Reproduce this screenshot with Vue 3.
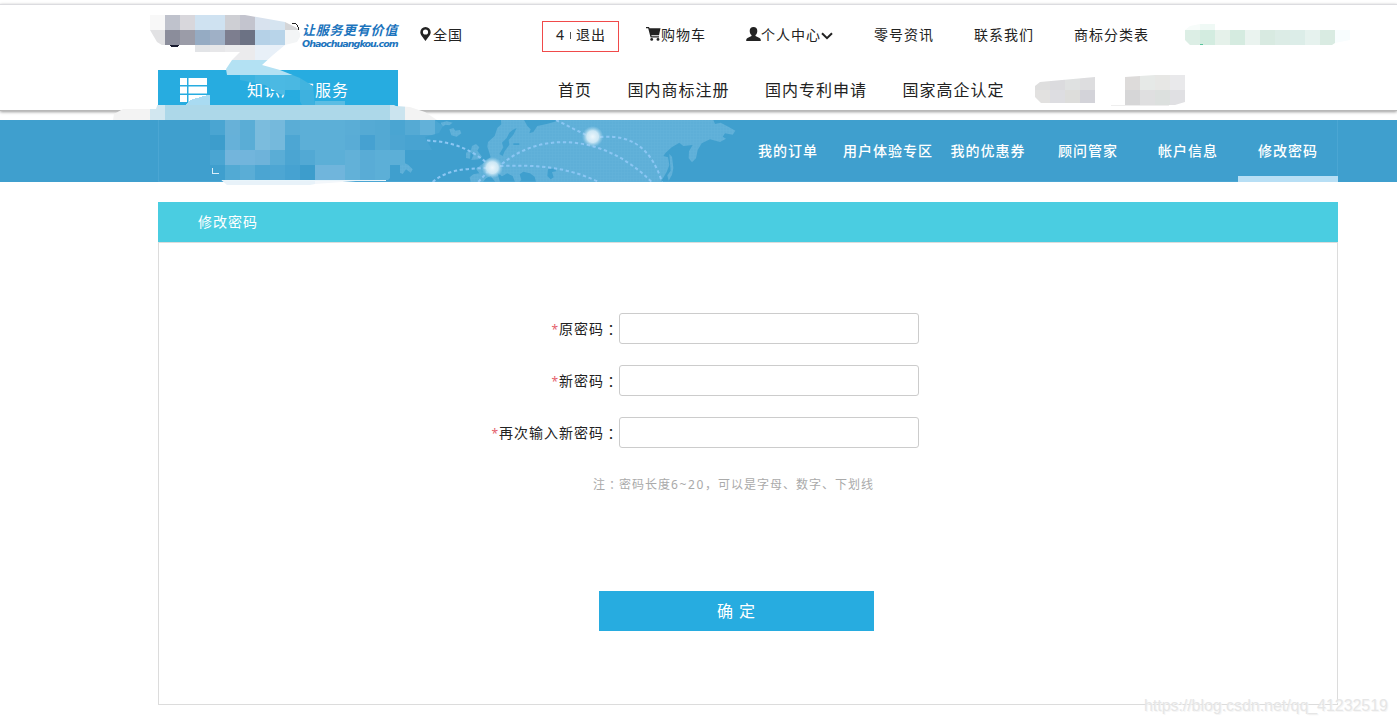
<script setup>
const utilities = ['零号资讯', '联系我们', '商标分类表']
const navItems = ['首页', '国内商标注册', '国内专利申请', '国家高企认定']
const tabs = ['我的订单', '用户体验专区', '我的优惠券', '顾问管家', '帐户信息', '修改密码']
const fields = ['原密码', '新密码', '再次输入新密码']

// Each mosaic row: left edge, top edge, height, then one colour per 15px tile.
const row = (x, y, h, colors) =>
  colors.split(' ').map((c, i) => ({ x: x + i * 15, y, h, c })).filter((t) => t.c !== '-')

const logoTiles = [
  ...row(150, 15, 15, '#f8f8f8 #bfc2cc #d8d7dc #cfe2f1 #cfe2f1 #cecfd4 #c3c4ce #d8e2ee #d5e4f0 #d4d5d7'),
  ...row(150, 30, 15, '#e2e2e4 #8b8d9b #9b9ca8 #95abc3 #9fb0c6 #7d7e8f #6c7284 #b5d1e7 #b8d4e9 #f3f5f6'),
  ...row(195, 45, 15, '#e2e4e7 #e7e7e9 #ebebed #ebebed #e8f0f8 #e8f0f8 #f3f5f6'),
  ...row(225, 60, 15, '#b3e1f3 #b3e1f3 #b3e1f3 #b3e1f3 #b3e1f3'),
  ...row(240, 75, 15, '#3bb3e0 #46b7e2 #4bb9e3 #4ab8e2 #42b4df #42b4df'),
  ...row(240, 90, 15, '#3bb3e0 #3bb3e0 #4ebae4 #27ace0 #3eb1df #30aee0'),
]
const bandTiles = [
  ...row(110, 105, 15, '#f3f3f3 #f3f3f3 #f3f3f3'),
  ...row(150, 105, 15, '#d2e7f0 #add8e9 #add8e9 #add8e9 #add8e9 #add8e9 #add8e9 #add8e9 #add8e9 #add8e9 #add8e9 #add8e9 #add8e9 #add8e9 #add8e9 #add8e9 #cbe4ef #f3f3f3 #f3f3f3 #f3f3f3'),
]
const bannerTiles = [
  ...row(210, 120, 15, '#4aa5d2 #67b1d8 #5aadd6 #7bbcdd #75b9dc #5aadd6 #5cafd7 #5cafd7 #5cafd7 #5aadd6 #55aad4 #53a9d3 #4aa5d2 #55aad4 #62b1d9 #4aa5d2'),
  ...row(210, 135, 15, '#3d9dcc #66b1d9 #5aadd6 #7bbcdd #75b9dc #4da6d3 #5cafd7 #5cafd7 #5cafd7 #59acd6 #46a1d1 #53a9d3 #4ca5d2 #48a3d1 #48a3d1'),
  ...row(210, 150, 15, '#4aa5d2 #73b5dc #72b5dc #6eb3da #5aadd6 #4ba5d2 #52a9d4 #5cafd7 #5cafd7 #62b1d8 #59acd6 #5cafd7 #5cafd7'),
  ...row(210, 165, 15, '#3f9fce #52aad4 #5aadd6 #4ba5d2 #4da6d3 #46a2d1 #3d9dcc #70b5dc #70b5dc #62b1d8 #59acd6 #5cafd7'),
  ...row(210, 180, 6, '#e8f2f9 #e8f2f9 #e8f2f9 #e8f2f9 #e8f2f9 #e8f2f9 #e8f2f9 #f3f7fb #f3f7fb #f3f7fb'),
]
const greenTiles = [
  ...row(1185, 24, 6, '#f7fcfa #eff9f5'),
  ...row(1185, 30, 15, '#dceee5 #d3ece0 #e5f1ea #d5ebe0 #eaf3ef #d8eae1 #dcece6 #dcede8 #e6f2ee #d9ebe2 #f8fdfe'),
]
const grayTiles = [
  ...row(1035, 75, 15, '#dedede #dbdbde #dfe1e1 #dddddf'),
  ...row(1035, 90, 13, '#e2e1e0 #dddde1 #dddddb #d3d3d9'),
  ...row(1125, 75, 15, '#dddbda #e6e9e7 #e7e7e5 #e9e9eb'),
  ...row(1125, 90, 15, '#d6d6d7 #dfdfe0 #dce0de #e0e0e3'),
]
const groups = [
  { clip: 'clip-logo', tiles: logoTiles },
  { clip: 'clip-band', tiles: bandTiles },
  { clip: 'clip-banner', tiles: bannerTiles },
  { clip: 'clip-green', tiles: greenTiles },
  { clip: 'clip-gray', tiles: grayTiles },
]
</script>

<template>
  <div class="page">
    <header class="header">
      <div class="topline">
        <div class="slogan">
          <span class="slogan-cn">让服务更有价值</span>
          <span class="slogan-url">Ohaochuangkou.com</span>
        </div>
        <div class="place">
          <svg width="11" height="14" viewBox="0 0 11 14"><path fill="#222" fill-rule="evenodd" d="M5.5 0A5.2 5.2 0 0 0 .3 5.2C.3 8 3 10 5.5 14 8 10 10.700 8 10.700 5.200A5.200 5.200 0 0 0 5.500 0ZM5.500 2.400A2.600 2.600 0 1 1 5.500 7.600 2.600 2.600 0 0 1 5.500 2.400Z" /></svg>
          <span>全国</span>
        </div>
        <div class="account"><span class="count">4</span><i class="divider"></i><span>退出</span></div>
        <div class="cart">
          <svg width="15" height="14" viewBox="0 0 15 14"><path fill="#222" d="M0 0H3L3.500 1.300H14.500L13 8.300H5.300L5.600 9.200H13V10.600H4.600L2.200 1.300H0Z" /><circle cx="5.700" cy="12.400" r="1.400" fill="#222" /><circle cx="12" cy="12.400" r="1.400" fill="#222" /></svg>
          <span>购物车</span>
        </div>
        <div class="center">
          <svg width="15" height="14" viewBox="0 0 15 14"><path fill="#222" d="M7.500 0C9.900 0 11.300 1.500 11.300 3.900 11.300 5.800 10.500 7.200 9.500 8V9L13.500 11C14.400 11.500 14.800 12.200 14.800 14H.2C.2 12.200.6 11.500 1.500 11L5.500 9V8C4.500 7.200 3.700 5.800 3.700 3.900 3.700 1.500 5.100 0 7.500 0Z" /></svg>
          <span>个人中心</span>
          <svg class="chevron" width="12" height="8" viewBox="0 0 12 8"><path d="M1 1.200 6 6.200 11 1.200" fill="none" stroke="#222" stroke-width="2" /></svg>
        </div>
        <a v-for="u in utilities" :key="u" class="utility">{{ u }}</a>
      </div>
      <div class="mainline">
        <div class="catalog">
          <svg width="27" height="24" viewBox="0 0 27 24"><path fill="#fff" d="M0 0h7v7H0zM8.500 0H27v7H8.500zM0 8.500h7v7H0zM8.500 8.500H27v7H8.500zM0 17h7v7H0zM8.500 17H27v7H8.500z" /></svg>
          <span>知识产权服务</span>
        </div>
        <nav class="main-nav"><a v-for="n in navItems" :key="n">{{ n }}</a></nav>
      </div>
    </header>

    <div class="banner">
      <svg class="map" width="350" height="62" viewBox="0 30 1050 186">
        <defs>
          <pattern id="grid" width="9" height="9" patternUnits="userSpaceOnUse"><rect width="9" height="9" fill="#5eafd8" /><path d="M0 8H9M8 0V9" stroke="#65b3da" stroke-width="1.500" /></pattern>
          <radialGradient id="glow"><stop offset="0" stop-color="#edf7fc" /><stop offset=".55" stop-color="#d7edf8" stop-opacity=".9" /><stop offset="1" stop-color="#a7d6ee" stop-opacity="0" /></radialGradient>
        </defs>
        <g fill="url(#grid)">
          <path d="M303 30H372L382 48 392 58 388 70 400 66 412 48 440 42 462 36 482 30H940L945 42 962 38 985 50 1006 62 998 74 975 70 968 80 978 86 960 96 930 88 905 100 893 120 888 145 876 157 866 145 867 124 878 105 850 108 838 98 815 112 797 128 790 138 804 142 808 165 800 186 788 206 782 216H408L404 200 390 190 370 185 359 193 364 210 358 216H345L338 198 322 190 306 199 292 188 300 216H286L272 198 258 205 249 216H212L209 202 220 193 238 190 228 176 247 162 260 150 272 142 268 128 262 110 264 96 284 78 292 54 304 43Z" />
          <path d="M148 58 160 54 166 62 180 60 184 70 170 80 154 76ZM216 108 228 102 238 112 232 122 246 140 236 148 214 150 220 136 212 126ZM198 128 212 122 210 146 198 144ZM0 162 12 158 24 164 38 178 32 188 18 178 8 192 0 188ZM122 38 140 34 158 38 148 46 136 44 128 50ZM808 132 816 140 820 174 816 194 806 212 802 196 812 182Z" />
        </g>
        <g fill="#40a0cf">
          <path d="M338 60 350 54 340 74 326 90 328 104 314 124 308 138 298 132 310 112 306 98 320 84 328 68ZM340 100H358V105H340ZM444 178 466 175 468 184 456 186 461 202 452 208 442 198Z" />
        </g>
        <g fill="none" stroke="#8bc6f3" stroke-width="6" stroke-dasharray="10 8">
          <path d="M45 92C130 88 200 106 262 160M98 216C140 180 190 176 260 174M300 168C410 164 500 170 596 216M235 216 262 186M306 162C420 65 610 70 755 216M468 30 560 76M600 81C700 72 755 120 786 216" />
        </g>
        <circle cx="277" cy="173" r="32" fill="url(#glow)" /><circle cx="578" cy="80" r="32" fill="url(#glow)" />
      </svg>
      <nav class="tabs">
        <a v-for="(t, i) in tabs" :key="t" :class="{ active: i === tabs.length - 1 }">{{ t }}</a>
      </nav>
    </div>

    <main class="panel">
      <h1>修改密码</h1>
      <form @submit.prevent>
        <label v-for="f in fields" :key="f" class="field">
          <span class="name"><em>*</em>{{ f }}<span class="colon">：</span></span>
          <input type="password" />
        </label>
        <p class="note">注<span class="colon">：</span>密码长度<span class="range">6~20</span>，可以是字母、数字、下划线</p>
        <button type="submit">确 定</button>
      </form>
    </main>

    <svg class="mosaic" width="1397" height="190" shape-rendering="crispEdges">
      <defs>
        <clipPath id="clip-logo"><path d="M150 15H245L285 22 297 28 301 35 297 42 285 45 273 55 262 65 280 70 300 78 313 86 315 105H302L298 98 280 94 265 85 240 80V75H227L226 69 232 60 240 52H195V47H165L157 42 150 30Z" /></clipPath>
        <clipPath id="clip-band"><path d="M113 120 114 114 123 109H156L158 103 165 97V105H390V103L396 106 410 107 425 112 437 120Z" /></clipPath>
        <clipPath id="clip-banner"><path d="M210 120H435L443 126 439 133 425 137 432 150 405 152V165L390 165V178L387 181H356L315 184 310 185H227L219 178 210 165Z" /></clipPath>
        <clipPath id="clip-green"><path d="M1185 30 1190 26 1200 24H1215V30H1350V40L1335 43 1332 45H1190L1185 40Z" /></clipPath>
        <clipPath id="clip-gray"><path d="M1035 86 1040 82 1095 77V103H1041L1035 97ZM1125 77 1155 75H1185V102L1175 105H1125Z" /></clipPath>
      </defs>
      <path d="M168 43H181L177 47H171Z" fill="#17192e" />
      <path d="M292 23.500Q298.500 22.500 298.500 30" fill="none" stroke="#222" />
      <path d="M197 98 208 95H210V105H185L190 100Z" fill="#a9dbf2" />
      <path d="M315 101H345V105H315Z" fill="#5abde4" />
      <g v-for="g in groups" :key="g.clip" :clip-path="`url(#${g.clip})`">
        <rect v-for="(t, i) in g.tiles" :key="i" :x="t.x" :y="t.y" width="15" :height="t.h" :fill="t.c" />
      </g>
      <path d="M212.500 168V173.500H219" fill="none" stroke="#d9edf8" />
      <path d="M222 180.500H386" stroke="#e9f5fb" />
      <path d="M1200 44H1203V45H1200Z" fill="#58c39b" />
      <path d="M1111 105H1169V106H1111Z" fill="#eee" />
    </svg>
    <div class="watermark">https://blog.csdn.net/qq_41232519</div>
  </div>
</template>

<style>
body { background: #fff; }
</style>

<style scoped>
* { box-sizing: border-box; }
.page {
  position: relative;
  width: 1397px;
  height: 724px;
  overflow: hidden;
  padding-top: 4px;
  background: #fff;
  color: #222;
  font: 14px/20px "Noto Sans", "Noto Sans CJK SC", sans-serif;
  letter-spacing: 1px;
  white-space: nowrap;
}
.header {
  height: 107px;
  padding-left: 158px;
  border-top: 1px solid #dcdce0;
  border-bottom: 1px solid #b8b8b8;
  box-shadow: 0 1px 3px #999;
}
.topline {
  display: grid;
  grid-template-columns: 144px 118px 122px 104px 100px 128px 100px 100px 100px;
  align-items: center;
  height: 65px;
  padding-bottom: 6px;
}
.slogan { grid-column: 2; display: flex; flex-direction: column; padding-top: 2px; color: #1c74bd; font-weight: 700; font-style: italic; letter-spacing: 0; }
.slogan-cn { font-size: 13px; line-height: 16px; letter-spacing: .7px; }
.slogan-url { font: italic 700 9.5px/11px "DejaVu Sans", sans-serif; letter-spacing: -.95px; }
.place, .cart, .center { display: flex; align-items: center; }
.place span { margin-left: 2px; }
.place svg, .cart svg, .center svg { margin-top: -1px; }
.account { display: flex; align-items: center; width: 77px; height: 31px; margin-top: 3px; padding: 0 0 3px 13px; border: 1px solid #f04a4a; }
.divider { width: 1px; height: 7px; margin: 2px 5px 0 5px; background: #555; }
.center .chevron { margin-top: 2px; }
.mainline { display: flex; height: 40px; }
.catalog { display: flex; align-items: center; width: 240px; height: 40px; padding-left: 22px; background: #27ace0; color: #fff; font-size: 16px; }
.catalog span { margin-left: 40px; }
.main-nav { display: flex; gap: 35.500px; margin-left: 160px; font-size: 16px; line-height: 40px; }
.banner { position: relative; display: flex; height: 62px; margin-top: 9px; padding-left: 158px; background: #3f9fce; }
.map { position: absolute; left: 400px; top: 0; }
.tabs { display: flex; width: 1180px; justify-content: flex-end; border: 1px solid #4ba6d3; border-top: 0; }
.tabs a { flex: none; width: 100px; height: 62px; text-align: center; line-height: 62px; color: #fff; font-weight: 500; }
.tabs .active { border-bottom: 6px solid #b8dff5; margin-right: -1px; }
.panel { width: 1180px; height: 503px; margin: 20px 0 0 158px; border: 1px solid #dcdcdc; border-top: 0; }
.panel h1 { margin: 0 -1px; height: 41px; padding-left: 40px; background: #4acde1; border-bottom: 1px solid #dcdcdc; color: #fff; font-size: 14px; font-weight: 400; line-height: 40px; }
.panel form { display: flex; flex-direction: column; padding-top: 70px; }
.field { display: flex; align-items: center; height: 31px; margin-bottom: 21px; }
.name { width: 460px; height: 20px; margin-top: -2px; text-align: right; }
.name em { color: #e4606c; font-size: 12px; font-style: normal; }
.colon { position: relative; top: 1px; font-family: "Noto Sans CJK TC", sans-serif; }
.field input { width: 300px; height: 31px; border: 1px solid #ccc; border-radius: 3px; background: #fff; }
.note { height: 20px; margin: 5px 0 0 434px; color: #aaa; font-size: 12px; }
.range { letter-spacing: 1.6px; }
button { width: 275px; height: 40px; margin: 97px 0 0 440px; padding: 0; border: 0; background: #27ace0; color: #fff; font: 16px/40px "Noto Sans", "Noto Sans CJK SC", sans-serif; letter-spacing: 1px; }
.mosaic { position: absolute; left: 0; top: 0; pointer-events: none; }
.watermark { position: absolute; left: 1144px; top: 696px; color: #e6e6e6; text-shadow: 1px 1px 0 #f6f6f6; font: 16px/20px "Liberation Sans", Arial, sans-serif; letter-spacing: -.05px; }
</style>
